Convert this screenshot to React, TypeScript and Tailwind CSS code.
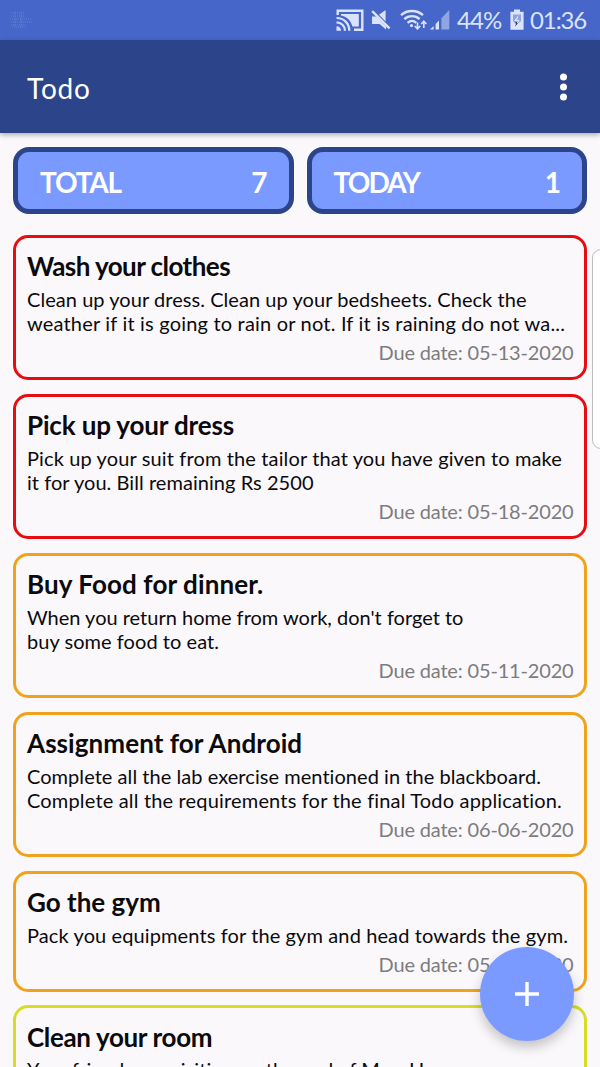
import React from 'react';

type Line = { text: string; tracking: string };
type Task = { title: Line; lines: Line[]; due: string; border: string };

const tasks: Task[] = [
  {
    title: { text: 'Wash your clothes', tracking: 'tracking-[-0.55px]' },
    border: 'border-[#e60c0f]',
    due: '05-13-2020',
    lines: [
      { text: 'Clean up your dress. Clean up your bedsheets. Check the', tracking: 'tracking-[0.05px]' },
      { text: 'weather if it is going to rain or not. If it is raining do not wa...', tracking: 'tracking-[0.19px]' },
    ],
  },
  {
    title: { text: 'Pick up your dress', tracking: 'tracking-[-0.15px]' },
    border: 'border-[#e60c0f]',
    due: '05-18-2020',
    lines: [
      { text: 'Pick up your suit from the tailor that you have given to make', tracking: 'tracking-[0.13px]' },
      { text: 'it for you. Bill remaining Rs 2500', tracking: 'tracking-[0.05px]' },
    ],
  },
  {
    title: { text: 'Buy Food for dinner.', tracking: 'tracking-[0.1px]' },
    border: 'border-[#f0a31a]',
    due: '05-11-2020',
    lines: [
      { text: "When you return home from work, don't forget to", tracking: 'tracking-normal' },
      { text: 'buy some food to eat.', tracking: 'tracking-[0.05px]' },
    ],
  },
  {
    title: { text: 'Assignment for Android', tracking: 'tracking-[0.07px]' },
    border: 'border-[#f0a31a]',
    due: '06-06-2020',
    lines: [
      { text: 'Complete all the lab exercise mentioned in the blackboard.', tracking: 'tracking-[0.05px]' },
      { text: 'Complete all the requirements for the final Todo application.', tracking: 'tracking-[0.17px]' },
    ],
  },
  {
    title: { text: 'Go the gym', tracking: 'tracking-normal' },
    border: 'border-[#f0a31a]',
    due: '05-11-2020',
    lines: [{ text: 'Pack you equipments for the gym and head towards the gym.', tracking: 'tracking-[0.11px]' }],
  },
  {
    title: { text: 'Clean your room', tracking: 'tracking-[-0.35px]' },
    border: 'border-[#d8dc24]',
    due: '05-31-2020',
    lines: [
      { text: 'Your friends are visiting on the end of May. Have some', tracking: 'tracking-[0.05px]' },
      { text: 'snacks ready.', tracking: 'tracking-normal' },
    ],
  },
];

function CastIcon() {
  return (
    <svg className="h-[23px] w-[28px]" viewBox="0 0 28 23" fill="none" stroke="currentColor">
      <path d="M1.7 6V1.7h24.6v19.1H18" strokeWidth="2.4" />
      <path d="M5 5h17.8v12.6H16.4C14.9 11 10.5 7.4 5 6.4Z" fill="currentColor" stroke="none" />
      <path d="M.5 9c7.4 0 12.8 5.4 12.8 12.8M.5 13.3c4.8 0 8.5 3.7 8.5 8.5" strokeWidth="2.2" />
      <path d="M.5 17.2a4.6 4.6 0 0 1 4.6 4.6H.5Z" fill="currentColor" stroke="none" />
    </svg>
  );
}

function MuteIcon() {
  return (
    <svg className="h-[22px] w-[20px]" viewBox="0 0 20 22" fill="currentColor">
      <path d="M1 7.5h4.2L15 17.5V20.6L8.6 15H1ZM8 5.8 14.6 1v11.6Z" />
      <path d="M1.2 2.2 18.5 19.4" stroke="currentColor" strokeWidth="2.4" />
    </svg>
  );
}

function WifiIcon() {
  return (
    <svg className="h-[22px] w-[28px]" viewBox="0 0 28 22" fill="none" stroke="currentColor" strokeWidth="2.3">
      <path d="M1 6.2c6.2-5.6 15.8-5.6 22 0M4.3 10.2c4.3-4 11-4 15.3 0M7.6 13.8c2.6-2.3 6.1-2.3 8.7 0" />
      <circle cx="11.5" cy="16.6" r="1.6" fill="currentColor" stroke="none" />
      <path d="M17.5 13.5v6M14.8 17l2.7 2.8 2.7-2.8M23.8 19v-6.3M21.2 15l2.6-2.8 2.6 2.8" strokeWidth="1.6" />
    </svg>
  );
}

function SignalIcon() {
  return (
    <svg className="h-[22px] w-[20px]" viewBox="0 0 20 22" fill="currentColor">
      <path d="M0 20.5 3.6 17v3.5ZM5.6 15.1 9 11.6v8.9H5.6Z" />
      <path d="M11.4 9.2 19.3 1v19.5h-7.9Z" opacity=".5" />
    </svg>
  );
}

function BatteryIcon() {
  return (
    <svg className="h-[22px] w-[14px]" viewBox="0 0 14 22">
      <path d="M4 0.5h6v2.3h3.6v18H.4v-18H4Z" fill="currentColor" />
      <path d="M3 5.5h8v6.7L7 15l-4-2.5Z" fill="#8fa3e0" />
      <path d="M8.5 6 4 12h2.8l-1.2 5.2L9.8 11H7.2Z" fill="currentColor" />
      <path d="M7.4 12.2 4.5 14.2h1.8L5 17.4l3-3.2H6.8Z" fill="#1d2948" />
    </svg>
  );
}

function StatusBar() {
  return (
    <div className="flex h-10 shrink-0 items-center bg-[#4766ca] pr-[13px] pl-[10px] text-[24px] leading-none text-[#dbe3fa]">
      <svg className="h-[18px] w-[32px] opacity-20" viewBox="0 0 32 18" fill="none" stroke="currentColor" strokeDasharray="1 1">
        <path d="M1 2h14M1 5h15M0 8h22M1 11h21M1 14h16M2 16h14M11 1v16M5 1v16" />
      </svg>
      <div className="ml-auto flex items-center">
        <CastIcon />
        <div className="ml-[7px] flex"><MuteIcon /></div>
        <div className="ml-[9px] flex"><WifiIcon /></div>
        <div className="ml-[2px] flex"><SignalIcon /></div>
        <span className="ml-[7px] w-[45px] tracking-[-0.9px]">44%</span>
        <div className="ml-[8px] flex"><BatteryIcon /></div>
        <span className="ml-[6px] w-[57px] tracking-[-1.1px]">01:36</span>
      </div>
    </div>
  );
}

function Counter({ label, value, tracking }: { label: string; value: number; tracking: string }) {
  return (
    <div className="flex h-[67px] flex-1 items-center justify-between rounded-[16px] border-[5px] border-[#2c4489] bg-[#7b9aff] pt-[2px] pr-[21px] pl-[22px] text-[28px] leading-none font-bold text-white">
      <span className={tracking}>{label}</span>
      <span>{value}</span>
    </div>
  );
}

function TaskCard({ task }: { task: Task }) {
  return (
    <article className={`shrink-0 rounded-[15px] border-[3px] pt-[12.5px] pr-[10.5px] pb-[11px] pl-[11px] whitespace-nowrap text-[#0b0a0c] ${task.border}`}>
      <h2 className={`mb-[4.5px] text-[26px] leading-[32px] font-bold ${task.title.tracking}`}>{task.title.text}</h2>
      {task.lines.map((line) => (
        <p key={line.text} className={`text-[20px] leading-[24.5px] ${line.tracking}`}>
          {line.text}
        </p>
      ))}
      <p className="mt-[3.5px] text-right text-[20px] leading-[27px] tracking-[-0.17px] text-[#7d7c7e]">Due date: {task.due}</p>
    </article>
  );
}

export default function App() {
  return (
    <div className="relative flex h-[1067px] w-[600px] flex-col overflow-hidden bg-[#faf8fb] font-['Lato',sans-serif]">
      <StatusBar />
      <header className="z-10 flex h-[93px] shrink-0 items-center justify-between bg-[#2c4489] pr-[33px] pl-[27px] text-white shadow-[0_2px_5px_rgba(0,0,0,0.3)]">
        <h1 className="pt-[2px] text-[28px] leading-none tracking-[0.8px]">Todo</h1>
        <svg className="h-[28px] w-[7px]" viewBox="0 0 7 28" fill="currentColor">
          <circle cx="3.5" cy="4" r="3.5" />
          <circle cx="3.5" cy="14" r="3.5" />
          <circle cx="3.5" cy="24" r="3.5" />
        </svg>
      </header>
      <main className="flex min-h-0 flex-1 flex-col px-[13px] pt-[14px]">
        <div className="flex shrink-0 gap-[13px]">
          <Counter label="TOTAL" value={7} tracking="tracking-[-1.2px]" />
          <Counter label="TODAY" value={1} tracking="tracking-[-1.9px]" />
        </div>
        <div className="mt-[20.5px] flex flex-col gap-[13.5px]">
          {tasks.map((task) => (
            <TaskCard key={task.title.text} task={task} />
          ))}
        </div>
      </main>
      <div className="absolute top-[249px] -right-[4px] h-[200px] w-[12px] rounded-l-[9px] border border-[#bdbcbf] bg-white" />
      <button className="absolute top-[947px] left-[480px] flex h-[93.5px] w-[93.5px] items-center justify-center rounded-full bg-[#7b9aff] text-white shadow-[0_6px_12px_rgba(0,0,0,0.22)]">
        <svg className="h-[24px] w-[24px]" viewBox="0 0 24 24" stroke="currentColor" strokeWidth="3.4">
          <path d="M12 0v24M0 12h24" />
        </svg>
      </button>
    </div>
  );
}
